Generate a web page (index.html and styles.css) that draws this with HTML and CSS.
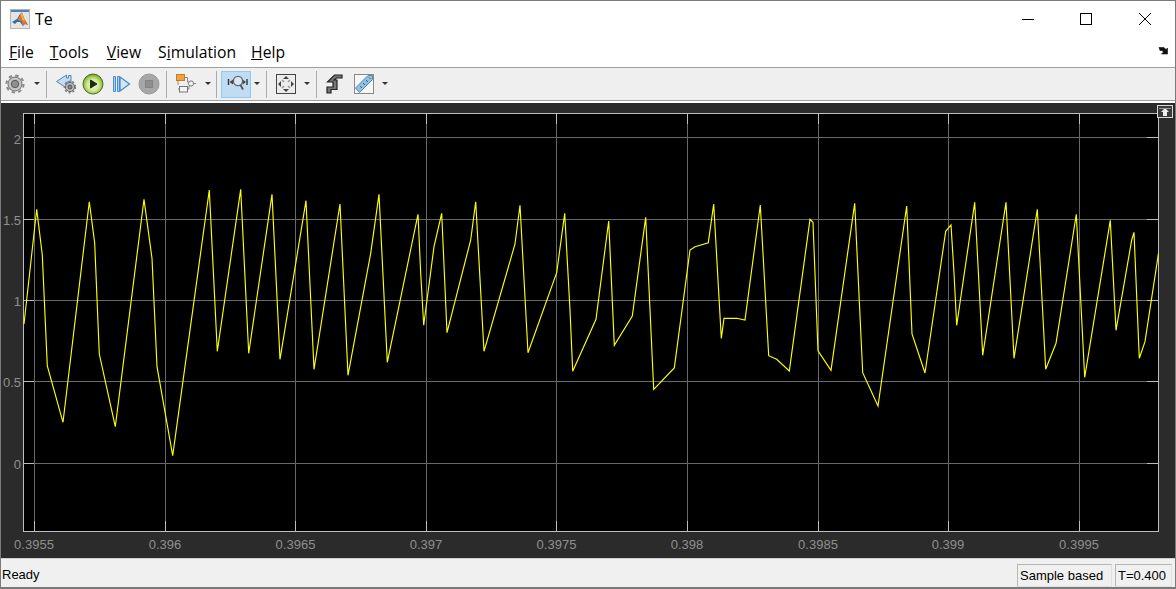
FILE: index.html
```html
<!DOCTYPE html>
<html lang="en">
<head>
<meta charset="utf-8">
<title>Te</title>
<link rel="stylesheet" href="styles.css">
</head>
<body>
<div class="window">
  <header class="titlebar">
    <svg class="logo" width="20" height="20" viewBox="0 0 20 20">
      <rect x="0.5" y="0.5" width="19" height="19" fill="#e4e4e4" stroke="#b4b4b4"/>
      <rect x="1" y="1" width="18" height="2" fill="#4f81b5"/>
      <path d="M2 13 L7 10 L10 5 L12 3.5 L14 9 L18 16 L15 15 L13 17 L10 13 L7 13 L5 15Z" fill="#2f6fa8"/>
      <path d="M7.5 11 L10.5 5.5 L12 3.5 L13.5 8 L17.5 16 L15 14.5 L13 17 L11.5 12Z" fill="#e8742a"/>
      <path d="M10.5 5.5 L12 3.5 L13.5 8 L15 12 L12.5 11Z" fill="#f2b33d"/>
    </svg>
    <span class="title">Te</span>
    <div class="winctl">
      <svg width="14" height="14" viewBox="0 0 14 14" class="wc wc-min"><path d="M1 7.5H13" stroke="#000" fill="none"/></svg>
      <svg width="14" height="14" viewBox="0 0 14 14" class="wc wc-max"><rect x="1.5" y="1.5" width="11" height="11" stroke="#000" fill="none"/></svg>
      <svg width="14" height="14" viewBox="0 0 14 14" class="wc wc-close"><path d="M1 1L13 13M13 1L1 13" stroke="#000" fill="none"/></svg>
    </div>
  </header>

  <nav class="menubar">
    <span class="menu m-file"><u>F</u>ile</span>
    <span class="menu m-tools"><u>T</u>ools</span>
    <span class="menu m-view"><u>V</u>iew</span>
    <span class="menu m-sim">S<u>i</u>mulation</span>
    <span class="menu m-help"><u>H</u>elp</span>
    <svg class="dock" width="12" height="10" viewBox="0 0 12 10"><path d="M1 1.5H6L8 3.5L9.5 2V8H3.5L5.5 6L4 4.5H2Z" fill="#111" stroke="#111" stroke-width=".6"/></svg>
  </nav>

  <div class="toolbar">
    <span class="tool t-gear">
      <svg width="20" height="20" viewBox="0 0 20 20">
        <circle cx="10" cy="10" r="8.6" fill="none" stroke="#8a8a8a" stroke-width="2" stroke-dasharray="3.4 3.35"/>
        <circle cx="10" cy="10" r="7" fill="#c4c4c4" stroke="#707070"/>
        <circle cx="10" cy="10" r="3.7" fill="#8f8f8f" stroke="#5c5c5c"/>
      </svg>
    </span>
    <span class="caret c-1"></span>
    <span class="sep s-1"></span>
    <span class="tool t-back">
      <svg width="20" height="20" viewBox="0 0 20 20">
        <path d="M.5 7.5L10.5 1V4H12.5V1.5H15V8H10.5V14Z" fill="#c6dbef" stroke="#4f86bd"/>
        <circle cx="14" cy="13" r="5.6" fill="none" stroke="#808080" stroke-width="1.6" stroke-dasharray="2 2"/>
        <circle cx="14" cy="13" r="4.6" fill="#b8b8b8" stroke="#6a6a6a"/>
        <circle cx="14" cy="13" r="2" fill="#8a8a8a" stroke="#555"/>
      </svg>
    </span>
    <span class="tool t-play">
      <svg width="22" height="22" viewBox="0 0 22 22">
        <defs>
          <radialGradient id="go" cx="50%" cy="55%" r="55%">
            <stop offset="0" stop-color="#f1f8dc"/><stop offset=".55" stop-color="#cfe793"/><stop offset=".85" stop-color="#8fbd3a"/><stop offset="1" stop-color="#5e8f1c"/>
          </radialGradient>
        </defs>
        <circle cx="11" cy="11" r="10" fill="url(#go)" stroke="#4c6f22"/>
        <path d="M8.5 7L15 11L8.5 15Z" fill="#1e2a12" stroke="#1e2a12"/>
      </svg>
    </span>
    <span class="tool t-step">
      <svg width="20" height="20" viewBox="0 0 20 20">
        <path d="M2.5 2.5V17.5H4.5V2.5ZM6.5 2.5V17.5H8.5V2.5Z" fill="#a9cbe9" stroke="#4d8ccb"/>
        <path d="M9 3L18.5 10L9 17Z" fill="#d6e6f5" stroke="#4d8ccb" stroke-width="1.3"/>
      </svg>
    </span>
    <span class="tool t-stop">
      <svg width="22" height="22" viewBox="0 0 22 22">
        <circle cx="11" cy="11" r="10" fill="#a6a6a6" stroke="#999"/>
        <rect x="7.5" y="7.5" width="7" height="7" fill="#8e8e8e" stroke="#858585"/>
      </svg>
    </span>
    <span class="sep s-2"></span>
    <span class="tool t-model">
      <svg width="20" height="20" viewBox="0 0 20 20">
        <rect x=".5" y=".5" width="8" height="6" fill="#f0a23e" stroke="#c87a24"/>
        <path d="M8.5 3.5H11.5V8H13M2 7V11M2 15H3.5M11.5 15H13V12" fill="none" stroke="#888"/>
        <rect x="3.5" y="12.5" width="8" height="5.5" fill="#f4f4f4" stroke="#777"/>
        <circle cx="15" cy="9.5" r="2.6" fill="#f2f2f2" stroke="#777"/>
        <path d="M17.5 9.5H20" stroke="#888"/>
      </svg>
    </span>
    <span class="caret c-2"></span>
    <span class="sep s-3"></span>
    <span class="tool t-zoom">
      <svg width="24" height="20" viewBox="0 0 24 20">
        <path d="M4.5 5V11M23 5V11" stroke="#333" stroke-width="1.4"/>
        <path d="M5.5 8L9 5.5V10.5ZM22 8L18.5 5.5V10.5Z" fill="#444"/>
        <circle cx="14" cy="7" r="4.6" fill="#d9e8f5" stroke="#666" stroke-width="1.4"/>
        <path d="M16.5 11L19 15.5" stroke="#555" stroke-width="1.8"/>
      </svg>
    </span>
    <span class="caret c-3"></span>
    <span class="sep s-4"></span>
    <span class="tool t-fit">
      <svg width="20" height="20" viewBox="0 0 20 20">
        <rect x=".5" y=".5" width="19" height="19" fill="#ececec" stroke="#444"/>
        <path d="M10 2L13 5H7ZM10 18L13 15H7ZM2 10L5 7V13ZM18 10L15 7V13Z" fill="#444"/>
        <path d="M6 6L8 8M14 6L12 8M6 14L8 12M14 14L12 12" stroke="#999" stroke-width="1.5"/>
      </svg>
    </span>
    <span class="caret c-4"></span>
    <span class="sep s-5"></span>
    <span class="tool t-signal">
      <svg width="17" height="20" viewBox="0 0 17 20">
        <path d="M1 19V13H7V8H1.5L8.5 1H16V4H10.5L8 6H11V15.5H5V19Z" fill="#777" stroke="#222" stroke-width="1.2"/>
      </svg>
    </span>
    <span class="tool t-ruler">
      <svg width="20" height="20" viewBox="0 0 20 20">
        <rect x=".5" y=".5" width="19" height="19" fill="#f6f6f6" stroke="#888"/>
        <path d="M1.5 14L14 1.5H18.5V5.5L5.5 18.5Z" fill="#8fc1e4" stroke="#5a87a8"/>
        <path d="M6 12L8 14M9 9L11 11M12 6L14 8M15 3.5L16.5 5" stroke="#3c6078"/>
      </svg>
    </span>
    <span class="caret c-5"></span>
  </div>

  <main class="scope">
    <svg class="plot" width="1174" height="455" viewBox="1 103 1174 455">
      <rect class="axes-bg" x="23.5" y="113.5" width="1135" height="417.5"/>
      <g class="grid">
        <path d="M34.5 113V531M165.5 113V531M295.5 113V531M426.5 113V531M556.5 113V531M687.5 113V531M818.5 113V531M948.5 113V531M1079.5 113V531"/>
        <path d="M23 137.5H1159M23 219.5H1159M23 300.5H1159M23 381.5H1159M23 463.5H1159"/>
      </g>
      <g class="ticks">
        <path d="M34.5 114V124M165.5 114V124M295.5 114V124M426.5 114V124M556.5 114V124M687.5 114V124M818.5 114V124M948.5 114V124M1079.5 114V124"/>
        <path d="M34.5 531V521M165.5 531V521M295.5 531V521M426.5 531V521M556.5 531V521M687.5 531V521M818.5 531V521M948.5 531V521M1079.5 531V521"/>
        <path d="M24 137.5H34M24 219.5H34M24 300.5H34M24 381.5H34M24 463.5H34"/>
        <path d="M1158 137.5H1147M1158 219.5H1147M1158 300.5H1147M1158 381.5H1147M1158 463.5H1147"/>
      </g>
      <rect class="axes-box" x="23.5" y="113.5" width="1135" height="417.5"/>
      <polyline class="trace" points="24,324 36.7,209.3 42.3,255 47.3,366 63,422.3 89.3,201.7 94.7,243.3 99.3,354 115.3,426.7 144,199.3 152,258.3 157,366.7 172.7,455.7 209.3,190 217.3,351.3 240.7,189.3 248.7,353.3 272,194.3 280,359.3 306,200.7 314,369.3 340,204 348,375.3 370.7,253.3 379,194.3 387.3,362.3 418,214.3 420.7,273.3 423.7,325.3 434,246.7 441.7,213.3 447,332.7 470.7,240 475.7,201.7 484,351.3 515,244 520,205.3 528,352.7 556.7,272.7 564.7,213.3 570,310 572.7,371.3 596,319.3 608.7,221 614.3,345.3 632.3,316 645.7,217.3 653.7,389.3 674.3,368 690,250 695,246.7 708.3,242.7 713.7,204 721.3,338.3 724,318.3 736.7,318.3 745,320 760.3,205 768.7,355.7 776.7,359.3 789.3,371 810,219.3 813,222.3 818,350.7 831,370.3 854.7,203.3 862.7,372.7 878,406 906.7,206 912,334 925,373 945.7,231.3 951,225 954,273 956.7,325.3 974.7,202.3 982.7,355.3 1006,202.3 1014,358.3 1037.3,209.3 1045.7,369.3 1056,343.3 1076.3,214.3 1084.7,377.3 1110.3,220.3 1116,330.3 1131.7,240 1134,232.3 1139.3,358.3 1145,341.7 1158.5,253.3"/>
      <g class="ylabels">
        <text x="21" y="144">2</text>
        <text x="21" y="225">1.5</text>
        <text x="21" y="306">1</text>
        <text x="21" y="387">0.5</text>
        <text x="21" y="469">0</text>
      </g>
      <g class="xlabels">
        <text x="34" y="549">0.3955</text>
        <text x="165" y="549">0.396</text>
        <text x="295.5" y="549">0.3965</text>
        <text x="426" y="549">0.397</text>
        <text x="556.5" y="549">0.3975</text>
        <text x="687" y="549">0.398</text>
        <text x="818" y="549">0.3985</text>
        <text x="948" y="549">0.399</text>
        <text x="1079" y="549">0.3995</text>
      </g>
    </svg>
    <button class="undock" type="button" aria-label="Undock">
      <svg width="12" height="8" viewBox="0 0 12 8"><path d="M6 0L10 4H8V8H4V4H2Z" fill="#eee"/><path d="M0 .5H12" stroke="#999"/></svg>
    </button>
  </main>

  <footer class="statusbar">
    <span class="ready">Ready</span>
    <span class="cell cell-mode">Sample based</span>
    <span class="cell cell-time">T=0.400</span>
  </footer>
</div>
</body>
</html>
```

FILE: styles.css
```css
html, body {
  margin: 0;
  padding: 0;
  background: #fff;
  overflow: hidden;
}

.window {
  width: 1176px;
  height: 589px;
  box-sizing: border-box;
  display: flex;
  flex-direction: column;
  border: 1px solid #7a7a7a;
  border-bottom-width: 2px;
  background: #fff;
  color: #000;
  font-family: "Open Sans", "Noto Sans", "Liberation Sans", sans-serif;
}

/* Title bar */
.titlebar {
  height: 29px;
  flex: none;
  display: flex;
  align-items: center;
  padding-left: 9px;
  padding-top: 7px;
  box-sizing: border-box;
}
.logo { flex: none; }
.title {
  margin-left: 5px;
  font-size: 16px;
  line-height: 20px;
}
.winctl {
  margin-left: auto;
  display: flex;
  align-items: center;
}
.wc { display: block; }
.wc-min { margin-right: 44px; }
.wc-max { margin-right: 45px; }
.wc-close { margin-right: 23px; }

/* Menu bar */
.menubar {
  height: 38px;
  flex: none;
  display: flex;
  align-items: center;
  padding-left: 8px;
  padding-top: 7px;
  box-sizing: border-box;
  font-size: 15.7px;
  line-height: 20px;
  border-bottom: 1px solid #a0a0a0;
}
.menu { white-space: nowrap; }
.m-tools { margin-left: 16px; }
.m-view { margin-left: 18px; }
.m-sim { margin-left: 17px; }
.m-help { margin-left: 15px; }
.dock { margin-left: auto; margin-right: 5px; margin-bottom: 2px; }

/* Toolbar */
.toolbar {
  height: 33px;
  flex: none;
  box-sizing: border-box;
  display: flex;
  align-items: center;
  padding-left: 2px;
  background: #efefef;
  border-bottom: 1px solid #a0a0a0;
}
.tool {
  height: 100%;
  display: flex;
  align-items: center;
  justify-content: center;
  flex: none;
}
.tool svg { display: block; }
.caret {
  flex: none;
  height: 4px;
  display: flex;
  justify-content: center;
}
.caret::before {
  content: "";
  width: 0;
  height: 0;
  border-left: 3.5px solid transparent;
  border-right: 3.5px solid transparent;
  border-top: 3.5px solid #333;
}
.sep {
  flex: none;
  width: 1px;
  height: 27px;
  background: #ababab;
  margin-right: 5px;
}
.t-gear { width: 24px; }
.c-1 { width: 19px; }
.t-back { width: 28px; }
.t-play { width: 26px; }
.t-step { width: 29px; }
.t-stop { width: 28px; }
.s-2 { margin-left: 3px; }
.t-model { width: 28px; }
.c-2 { width: 15px; }
.s-3 { margin-left: 1px; margin-right: 4px; }
.t-zoom {
  width: 30px;
  height: 27px;
  box-sizing: border-box;
  background: #c0dcf3;
  border: 1px solid #90c8f6;
}
.c-3 { width: 12px; }
.s-4 { margin-left: 3px; }
.t-fit { width: 28px; }
.c-4 { width: 14px; }
.s-5 { margin-left: 2px; }
.t-signal { width: 24px; }
.t-ruler { width: 36px; }
.c-5 { width: 6px; }

/* Scope */
.scope {
  position: relative;
  margin-top: 2px;
  height: 455px;
  flex: none;
  background: #2b2b2b;
}
.plot { display: block; }
.axes-bg { fill: #000; }
.axes-box { fill: none; stroke: #bdbdbd; shape-rendering: crispEdges; }
.grid path { stroke: #686868; fill: none; shape-rendering: crispEdges; }
.ticks path { stroke: #bdbdbd; fill: none; shape-rendering: crispEdges; }
.trace { fill: none; stroke: #ffff00; stroke-width: 1.15; stroke-linejoin: miter; }
.ylabels text, .xlabels text {
  font-family: "Liberation Sans", Arial, sans-serif;
  font-size: 13px;
  fill: #8f8f8f;
}
.ylabels text { text-anchor: end; }
.xlabels text { text-anchor: middle; }
.undock {
  position: absolute;
  right: 2px;
  top: 2px;
  width: 16px;
  height: 13px;
  padding: 0;
  box-sizing: border-box;
  border: 1px solid #d8d8d8;
  background: #3a3a3a;
  display: flex;
  align-items: center;
  justify-content: center;
}
.undock svg { display: block; }

/* Status bar */
.statusbar {
  flex: 1;
  min-height: 0;
  display: flex;
  align-items: center;
  background: #f0f0f0;
  font-family: "Liberation Sans", Arial, sans-serif;
  font-size: 13px;
  padding-left: 1px;
  padding-right: 3px;
  border-top: 1px solid #d0d0d0;
}
.ready { margin-right: auto; margin-top: 3px; }
.cell {
  height: 23px;
  box-sizing: border-box;
  border: 1px solid #b5b5b5;
  border-right-color: #e0e0e0;
  border-bottom-color: #e0e0e0;
  display: flex;
  align-items: center;
  padding-left: 2px;
  white-space: nowrap;
  margin-top: 4px;
}
.cell-mode { width: 95px; margin-right: 3px; }
.cell-time { width: 57px; }
```
